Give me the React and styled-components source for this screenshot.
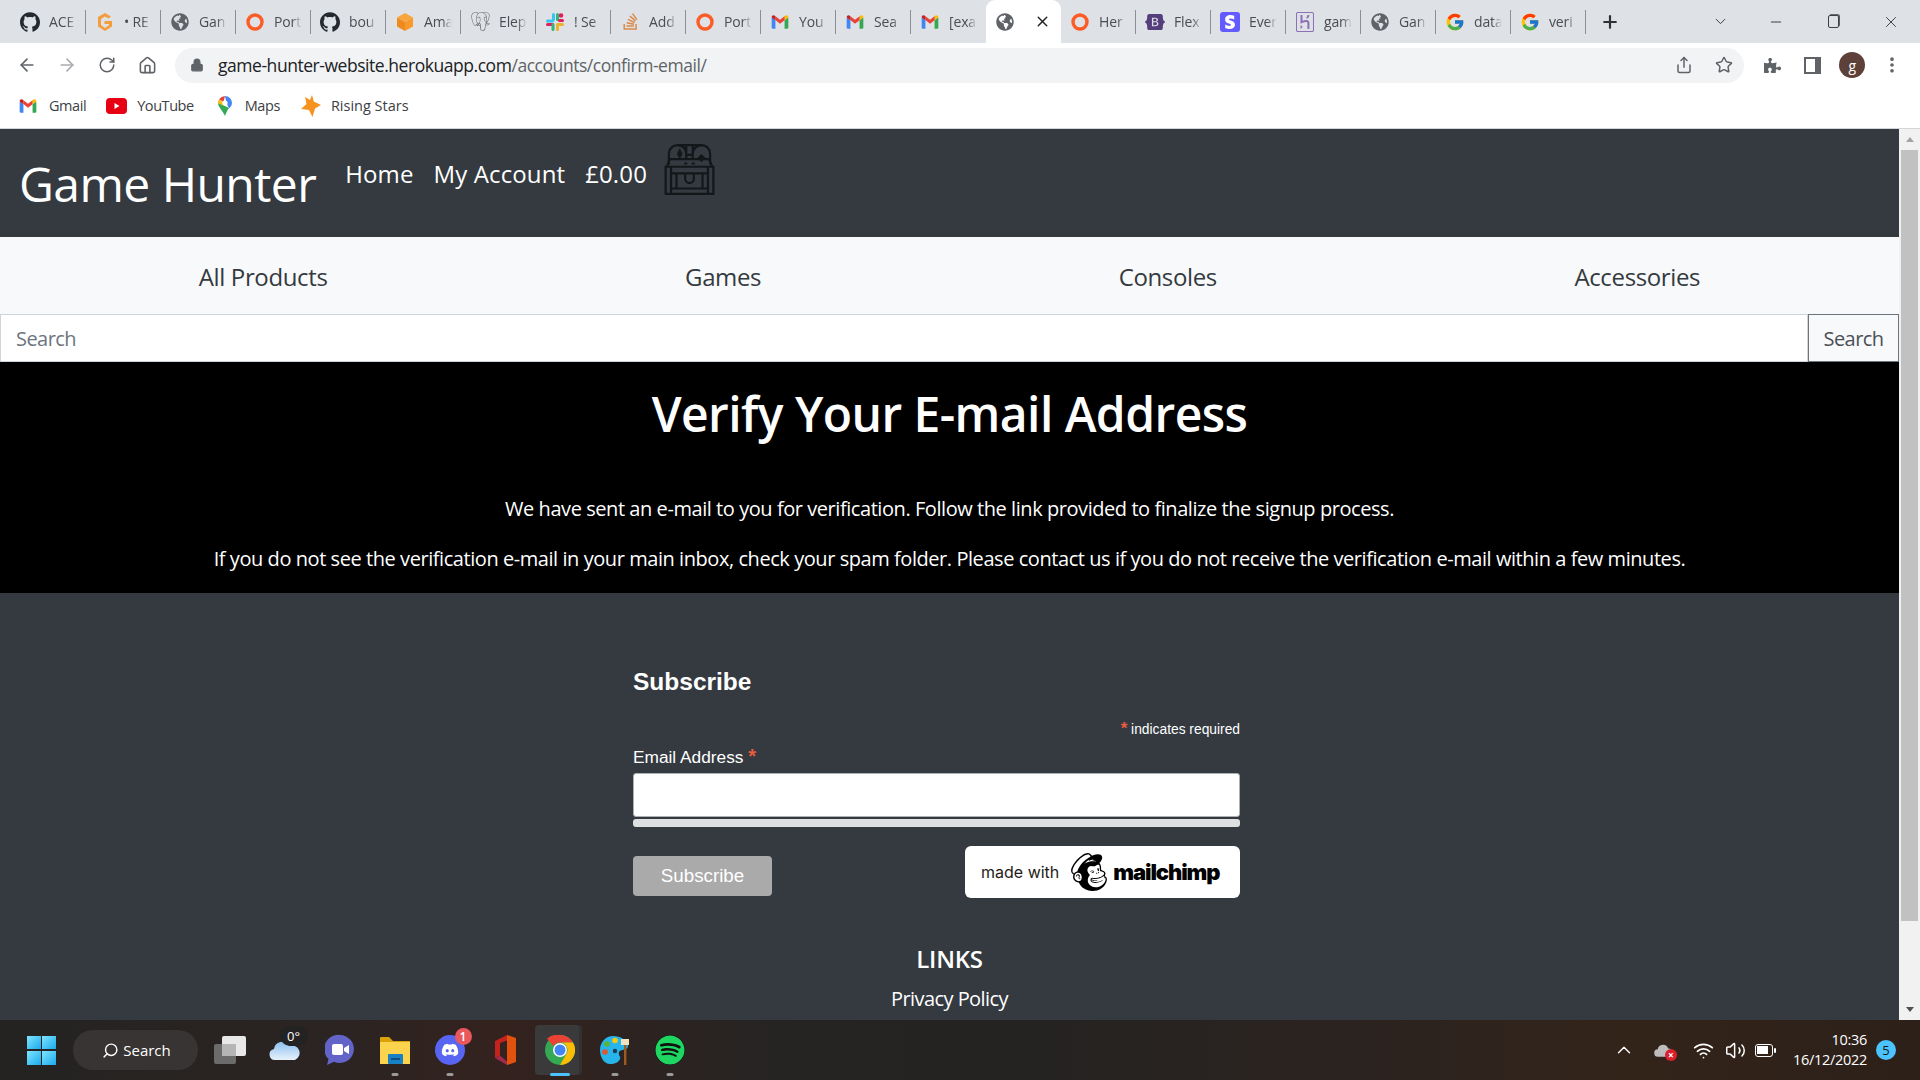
import React from "react";
import styled, { createGlobalStyle } from "styled-components";
import {
  ArrowLeft, ArrowRight, RotateCw, House, Lock, Share, Star, EllipsisVertical, Wifi, Volume2,
  ChevronUp, ChevronDown, Search as SearchIcon, Minus, X, Plus,
} from "lucide-react";
import { SiGithub, SiHeroku, SiBootstrap, SiMailchimp, SiPostgresql } from "react-icons/si";
import { FaGlobeAmericas, FaStripeS, FaStackOverflow, FaDiscord, FaSpotify, FaPuzzlePiece } from "react-icons/fa";
import { FcGoogle } from "react-icons/fc";

const UI = `"Open Sans", "Noto Sans", sans-serif`;
const ARIAL = `"Liberation Sans", Arial, sans-serif`;

const Global = createGlobalStyle`
  html, body { margin: 0; padding: 0; height: 100%; overflow: hidden; background: #fff; }
  * { box-sizing: border-box; }
  #root { height: 1080px; }
`;

const Screen = styled.div`
  width: 1920px; height: 1080px; display: flex; flex-direction: column; overflow: hidden;
  font-family: ${UI}; letter-spacing: -0.035em;
`;

/* ---------- tab strip ---------- */
const TabStrip = styled.div`
  height: 43px; flex: none; background: #dee1e6; display: flex; align-items: center;
  padding-left: 11px; color: #3c4043;
`;
const Tab = styled.div`
  width: 75px; height: 43px; flex: none; display: flex; align-items: center; gap: 9px;
  padding: 0 9px; position: relative; font-size: 14px; letter-spacing: -0.01em; color: #4a4e52;
  background: ${(p) => (p.$active ? "#fff" : "transparent")};
  border-radius: ${(p) => (p.$active ? "9px 9px 0 0" : "0")};
  &::after {
    content: ""; position: absolute; right: 0; top: 10px; height: 24px; width: 1px;
    background: ${(p) => (p.$plain ? "transparent" : "#8b8e93")};
  }
`;
const TabIcon = styled.span`
  width: 20px; height: 20px; flex: none; display: flex; align-items: center; justify-content: center;
  color: ${(p) => p.$color || "#3c4043"};
`;
const TabLabel = styled.span`
  flex: 1; min-width: 0; white-space: nowrap;
  -webkit-mask-image: linear-gradient(to right, #000 65%, transparent 100%);
  mask-image: linear-gradient(to right, #000 65%, transparent 100%);
`;
const TabClose = styled.span`
  margin-left: auto; display: flex; color: #202124; margin-right: 1px;
`;
const NewTab = styled.span`
  margin-left: 14px; display: flex; color: #2f3133;
`;
const WindowControls = styled.div`
  margin-left: auto; display: flex; align-items: center; color: #3c4043;
`;
const WinButton = styled.span`
  width: ${(p) => p.$w}px; display: flex; justify-content: center;
`;
const RestoreGlyph = styled.span`
  width: 11px; height: 13px; border: 1.3px solid #3c4043; border-radius: 2px; display: block;
  box-shadow: 1px -1px 0 -0.2px #3c4043;
`;

/* ---------- toolbar ---------- */
const Toolbar = styled.div`
  height: 44px; flex: none; background: #fff; display: flex; align-items: center; padding-left: 7px;
`;
const ToolButton = styled.span`
  width: 40px; flex: none; display: flex; justify-content: center;
  color: ${(p) => p.$color || "#5f6368"};
`;
const Omnibox = styled.div`
  width: 1569px; height: 35px; margin-left: 8px; flex: none; background: #f1f3f4; border-radius: 18px;
  display: flex; align-items: center; padding: 0 0 0 15px; font-size: 17.5px; color: #5f6368; letter-spacing: -0.026em;
`;
const Host = styled.span`
  color: #202124;
`;
const OmniText = styled.span`
  margin-left: 14px; white-space: nowrap;
`;
const OmniActions = styled.div`
  margin-left: auto; display: flex; gap: 0; color: #5f6368;
`;
const OmniAction = styled.span`
  width: 40px; display: flex; justify-content: center;
`;
const ToolSide = styled.div`
  display: flex; align-items: center; margin-left: 8px;
`;
const PanelGlyph = styled.span`
  width: 17px; height: 17px; border: 2.5px solid #5f6368; border-right-width: 6px; display: block;
`;
const Avatar = styled.span`
  width: 26px; height: 26px; border-radius: 50%; background: #5d4037; color: #fff; font-size: 14px;
  display: flex; align-items: center; justify-content: center;
`;

/* ---------- bookmarks ---------- */
const BookmarkBar = styled.div`
  height: 42px; flex: none; background: #fff; border-bottom: 1px solid #d3d5d8; display: flex; align-items: center;
  padding: 0 0 4px 18px; font-size: 14.5px; color: #3c4043; letter-spacing: -0.03em;
`;
const Bookmark = styled.span`
  display: flex; align-items: center; white-space: nowrap;
  gap: ${(p) => p.$gap}px; margin-right: ${(p) => p.$after}px;
  letter-spacing: ${(p) => (p.$wide ? "0" : "inherit")};
`;

/* ---------- content ---------- */
const Viewport = styled.div`
  flex: 1; min-height: 0; display: flex;
`;
const Page = styled.div`
  flex: 1; min-width: 0; display: flex; flex-direction: column; overflow: hidden;
`;
const Header = styled.header`
  height: 108px; flex: none; background: #343a40; display: flex; align-items: flex-start; padding: 15px 19px 0; color: #fff;
`;
const Brand = styled.div`
  font-size: 48px; line-height: 72px; margin: 4px 29px 0 0; white-space: nowrap;
`;
const HeadLinks = styled.nav`
  display: flex; gap: 20px; font-size: 24px; line-height: 36px; margin-top: 12px; letter-spacing: 0.005em;
`;
const Chest = styled.svg`
  width: 51px; height: 51px; margin-left: 17px; flex: none;
`;
const CategoryNav = styled.nav`
  height: 77px; flex: none; background: #f8f9fa; padding: 2px 20px 0; display: flex; align-items: center;
  justify-content: space-around; font-size: 24px; color: #343a40; letter-spacing: -0.015em;
`;
const SearchRow = styled.div`
  height: 48px; flex: none; display: flex; background: #f8f9fa;
`;
const SearchInput = styled.div`
  flex: 1; border: 1px solid #ced4da; background: #fff; padding: 0 15px; display: flex; align-items: center;
  font-size: 20px; color: #6c757d;
`;
const SearchButton = styled.div`
  width: 91px; flex: none; border: 1px solid #6c757d; display: flex; align-items: center; justify-content: center;
  font-size: 20px; color: #495057;
`;
const Hero = styled.section`
  height: 231px; flex: none; background: #000; color: #fff; text-align: center; padding-top: 16px;
`;
const HeroTitle = styled.h1`
  margin: 0 0 44px; font-size: 48px; line-height: 72px; font-weight: 600;
`;
const HeroText = styled.p`
  margin: 0 0 20px; font-size: 20px; line-height: 30px; letter-spacing: -0.022em;
`;
const Footer = styled.footer`
  flex: 1; min-height: 0; background: #343a40; color: #fff; overflow: hidden; padding-top: 71px;
  display: flex; flex-direction: column; align-items: center;
`;
const SubscribeForm = styled.div`
  width: 607px; margin-right: 26px; font-family: ${ARIAL}; letter-spacing: 0; display: flex; flex-direction: column;
`;
const FormTitle = styled.h2`
  margin: 0; font-size: 24.5px; line-height: 36px; font-weight: 700;
`;
const Required = styled.div`
  text-align: right; font-size: 13.8px; line-height: 18px; margin-top: 20px;
`;
const Star2 = styled.span`
  color: #e85c41; font-size: ${(p) => p.$size || 17}px; line-height: 1; font-weight: 700;
`;
const FieldLabel = styled.label`
  font-size: 17.3px; line-height: 20px; margin-top: 7px; display: block; height: 20px;
`;
const EmailInput = styled.div`
  height: 44px; margin-top: 7px; background: #fff; border: 1px solid #abb0b2; border-radius: 3px;
`;
const ThinBar = styled.div`
  height: 8px; margin-top: 2px; background: #dfe0e1; border-radius: 3px;
`;
const FormActions = styled.div`
  display: flex; justify-content: space-between; margin-top: 19px;
`;
const SubmitButton = styled.div`
  width: 139px; height: 40px; margin-top: 10px; background: #aaa; border-radius: 4px; color: #fff; font-size: 18.8px;
  display: flex; align-items: center; justify-content: center;
`;
const Badge = styled.div`
  width: 275px; height: 52px; background: #fff; border-radius: 6px; display: flex; align-items: center;
  padding-left: 16px; color: #241c15;
`;
const BadgeText = styled.span`
  font-family: "Inter", ${ARIAL}; font-size: 16px; margin-right: 11px;
`;
const BadgeWord = styled.span`
  font-family: "Inter", ${ARIAL}; font-size: 22px; font-weight: 900; letter-spacing: -0.05em; margin-left: 5px; color: #000;
`;
const LinksTitle = styled.h3`
  margin: 43px 0 0; font-size: 24px; line-height: 36px; font-weight: 600; text-align: center; letter-spacing: -0.01em;
`;
const LinkItem = styled.div`
  margin-top: 7px; font-size: 20px; line-height: 30px; text-align: center;
`;

/* ---------- scrollbar ---------- */
const Scrollbar = styled.div`
  width: 21px; flex: none; background: #f1f1f1; display: flex; flex-direction: column; align-items: center;
`;
const ScrollArrow = styled.div`
  height: 21px; flex: none; display: flex; align-items: center; justify-content: center;
  &::before {
    content: ""; border-left: 4.5px solid transparent; border-right: 4.5px solid transparent;
    ${(p) => (p.$down ? "border-top: 5px solid #505050;" : "border-bottom: 5px solid #a3a3a3;")}
  }
`;
const ScrollThumb = styled.div`
  width: 17px; height: 771px; background: #c1c1c1;
`;
const ScrollGap = styled.div`
  flex: 1;
`;

/* ---------- taskbar ---------- */
const Taskbar = styled.div`
  height: 60px; flex: none; display: flex; align-items: center; padding-left: 27px; color: #fff; letter-spacing: 0;
  background: linear-gradient(90deg, #242322 0%, #2b2422 18%, #34221e 26%, #262423 40%, #242322 52%, #2b2320 70%, #33241a 85%, #2c2019 100%);
`;
const WinLogo = styled.div`
  width: 29px; height: 29px; flex: none; display: grid; grid-template-columns: 1fr 1fr; gap: 1.5px;
`;
const WinPane = styled.span`
  background: linear-gradient(135deg, #7fe5fd, #19a9ee);
`;
const SearchPill = styled.div`
  width: 125px; height: 40px; margin-left: 17px; flex: none; border-radius: 20px; background: #383433;
  display: flex; align-items: center; justify-content: center; gap: 4px; font-size: 15px; padding-left: 2px;
`;
const TaskSlots = styled.div`
  display: flex; margin-left: 4px;
`;
const Slot = styled.div`
  width: 55px; height: 60px; flex: none; position: relative; display: flex; align-items: center; justify-content: center;
`;
const SlotActive = styled.span`
  position: absolute; left: 3px; top: 5px; width: 44px; height: 50px; border-radius: 4px; background: #3a3a3a;
  box-shadow: 3px 0 0 #323232;
`;
const SlotGlyph = styled.span`
  position: relative; display: flex;
`;
const RunDot = styled.span`
  position: absolute; bottom: 4px; left: 50%; transform: translateX(-50%); height: 3px; border-radius: 2px;
  width: ${(p) => (p.$on ? 20 : 7)}px; background: ${(p) => (p.$on ? "#4cc2ff" : "#9a9a9a")};
`;
const Counter = styled.span`
  position: absolute; top: -7px; right: -7px; width: 17px; height: 17px; border-radius: 50%; background: #e9585c;
  font-size: 12px; display: flex; align-items: center; justify-content: center; font-weight: 600;
`;
const TempChip = styled.span`
  position: absolute; top: -12px; left: 11px; width: 28px; height: 20px; border-radius: 10px; background: #232323;
  font-size: 13px; display: flex; align-items: center; justify-content: center;
`;
const Tray = styled.div`
  margin-left: auto; display: flex; align-items: center; padding-right: 24px;
`;
const TrayItem = styled.span`
  width: ${(p) => p.$w}px; display: flex; justify-content: center; position: relative;
`;
const Clock = styled.div`
  font-size: 14.5px; line-height: 20px; text-align: right; margin: 0 9px 0 14px; font-family: ${UI}; letter-spacing: -0.02em;
`;
const NotifyBadge = styled.span`
  width: 20px; height: 20px; border-radius: 50%; background: #4cc2ff; color: #1a1a1a; font-size: 13px;
  display: flex; align-items: center; justify-content: center;
`;
const BatteryGlyph = styled.span`
  width: 18px; height: 13px; border: 1.5px solid #fff; border-radius: 3px; position: relative; display: block;
  background: linear-gradient(#fff, #fff) 1px 1px / 11px 8px no-repeat;
  &::after { content: ""; position: absolute; right: -4px; top: 3px; width: 2px; height: 5px; background: #fff; border-radius: 1px; }
`;
const SyncError = styled.span`
  position: absolute; right: 8px; bottom: -4px; width: 12px; height: 12px; border-radius: 50%; background: #d9202c;
  color: #fff; font-size: 10px; line-height: 12px; text-align: center; font-weight: 700;
`;

/* ---------- drawn icons ---------- */
const Gmail = ({ s = 20 }) => (
  <svg width={s} height={s} viewBox="0 0 24 24">
    <path fill="#4285f4" d="M2 6.5v12A1.5 1.5 0 0 0 3.5 20H6.5V9.5z" />
    <path fill="#34a853" d="M17.5 9.5V20h3a1.5 1.5 0 0 0 1.5-1.500v-12z" />
    <path fill="#fbbc04" d="M17.5 5v5L22 6.500C22 4 19.500 3.200 17.500 5z" />
    <path fill="#ea4335" d="M6.500 9.500V5L12 9.200 17.500 5v5L12 14z" />
    <path fill="#c5221f" d="M2 6.500 6.500 10V5C4.500 3.200 2 4 2 6.500z" />
  </svg>
);
const Ring = () => (
  <svg width="20" height="20" viewBox="0 0 20 20"><circle cx="10" cy="10" r="7" fill="none" stroke="#fc5c26" strokeWidth="3.4" /></svg>
);
const GLogo = () => (
  <svg width="18" height="20" viewBox="0 0 18 20"><path d="M15 4.500 9 1 2 5v9.500L9 19l7-4.500V9H8.500v3H13v1l-4 3-4-3V7l4-2.500 3.500 2z" fill="#f59d3d" /></svg>
);
const Cube = () => (
  <svg width="20" height="20" viewBox="0 0 20 20">
    <path fill="#f6a63c" d="M10 1l8 4.500-8 4.500-8-4.500z" /><path fill="#ef8a1e" d="M2 5.500l8 4.500v9l-8-4.500z" /><path fill="#f79a2b" d="M18 5.500 10 10v9l8-4.500z" />
  </svg>
);
const SlackLogo = () => (
  <svg width="20" height="20" viewBox="0 0 20 20">
    <rect x="1" y="7.500" width="8" height="3" rx="1.500" fill="#36c5f0" /><rect x="7" y="1" width="3" height="8" rx="1.500" fill="#36c5f0" />
    <rect x="11" y="1" width="3" height="8" rx="1.500" fill="#2eb67d" /><rect x="13" y="7" width="6" height="3" rx="1.500" fill="#e01e5a" />
    <circle cx="16" cy="3.500" r="2.300" fill="#e01e5a" /><rect x="11" y="11" width="8" height="3" rx="1.500" fill="#ecb22e" />
    <rect x="11" y="12" width="3" height="7" rx="1.500" fill="#ecb22e" /><rect x="1" y="11" width="8" height="3" rx="1.500" fill="#e01e5a" />
    <rect x="6.500" y="11" width="3" height="8" rx="1.500" fill="#2eb67d" />
  </svg>
);
const ChestIcon = () => (
  <Chest viewBox="2 3 46 47" fill="none" stroke="#14171a" strokeWidth="2">
    <path d="M6 22V12a8 8 0 0 1 8-8h22a8 8 0 0 1 8 8v10" />
    <path d="M14 4a8 8 0 0 1 8 8v4M36 4a8 8 0 0 0-8 8v4M22 4v9h6V4" />
    <path d="M4 24l3-7h36l3 7M20 21h3M27 21h3" />
    <path d="M14 12l2 4 2-4-2-4zM33 16l3 3 3-3-3-3z" fill="#14171a" strokeWidth="1" />
    <path d="M3 24h44v25H3zM8 24v25M42 24v25M8 30h34M8 44h34M13 30v14M37 30v14" />
    <path d="M21 30v5a4 4 0 0 0 8 0v-5" />
  </Chest>
);
const MapsPin = () => (
  <svg width="16" height="21" viewBox="0 0 16 21">
    <path fill="#34a853" d="M8 21C6 16 1 12 1 8l5 2 6 3c-2 3-3 5-4 8z" />
    <path fill="#fbbc04" d="M1 8c0-1.500.400-2.700 1-3.700L6.500 8 6 10.500z" />
    <path fill="#ea4335" d="M2 4.300A8 8 0 0 1 8 1L6.500 7z" />
    <path fill="#4285f4" d="M8 1a7 7 0 0 1 7 7c0 2-1.500 4-3 5.500L9.500 8z" />
    <circle cx="8" cy="8" r="2.600" fill="#fff" />
  </svg>
);
const YouTube = () => (
  <svg width="21" height="16" viewBox="0 0 21 16"><rect width="21" height="16" rx="4" fill="#e60012" /><path d="M8.500 5v6l5-3z" fill="#fff" /></svg>
);
const RisingStar = () => (
  <svg width="20" height="22" viewBox="0 0 20 22"><path d="M11 0l1.800 6.500L20 10l-6 3.500L11.500 22 8 15 0 14l5.500-5L4 2l5 3z" fill="#f6921e" /></svg>
);
const Weather = () => (
  <svg width="32" height="24" viewBox="0 0 32 24">
    <defs><linearGradient id="wx" x1="0" y1="0" x2="0" y2="1"><stop offset="0" stopColor="#8cc0f0" /><stop offset="1" stopColor="#e7f2fc" /></linearGradient></defs>
    <path d="M6 22a5.500 5.500 0 0 1-1-10.900A8 8 0 0 1 20 8a6 6 0 0 1 6 14z" fill="url(#wx)" />
  </svg>
);
const TaskView = () => (
  <svg width="32" height="28" viewBox="0 0 32 28">
    <rect x="8" y="0" width="24" height="20" rx="2" fill="#e8e8e8" /><rect x="0" y="8" width="22" height="20" rx="2" fill="#6b6b6b" /><rect x="8" y="8" width="14" height="12" fill="#b5b5b5" />
  </svg>
);
const TeamsChat = () => (
  <svg width="30" height="32" viewBox="0 0 30 32">
    <path d="M15 1a14 14 0 1 1-6 26.700L2 31l1.500-6A14 14 0 0 1 15 1z" fill="#6264c8" />
    <rect x="7" y="10" width="11" height="11" rx="2" fill="#fff" /><path d="M19 14l5-3v9l-5-3z" fill="#fff" />
  </svg>
);
const Folder = () => (
  <svg width="30" height="28" viewBox="0 0 30 28">
    <path d="M0 2a1 1 0 0 1 1-1h8l4 4h17v3H0z" fill="#d9a20b" /><rect y="6" width="30" height="22" fill="#fcd34d" />
    <rect x="8" y="18" width="15" height="10" rx="1" fill="#1681c4" /><rect x="11" y="22" width="9" height="2" fill="#0d4f80" />
  </svg>
);
const Office = () => (
  <svg width="22" height="30" viewBox="0 0 22 30">
    <path d="M13 0l9 3v24l-9 3V0z" fill="#e2520f" />
    <path d="M13 0 1 6v17l5-2.500V8l7-2.500z" fill="#c3231c" />
    <path d="M1 23l5-2.500 7 6V30z" fill="#a12a4e" />
  </svg>
);
const ChromeLogo = () => (
  <svg width="30" height="30" viewBox="0 0 30 30">
    <circle cx="15" cy="15" r="15" fill="#34a853" />
    <path d="M15 0a15 15 0 0 1 13 7.500H15a7.500 7.500 0 0 0-6.500 3.750L2 3.800A15 15 0 0 1 15 0z" fill="#ea4335" />
    <path d="M28 7.500A15 15 0 0 1 15 30l6.500-11.250A7.500 7.500 0 0 0 15 7.500z" fill="#fbbc04" />
    <circle cx="15" cy="15" r="7" fill="#fff" /><circle cx="15" cy="15" r="5.500" fill="#4285f4" />
  </svg>
);
const Paint = () => (
  <svg width="30" height="30" viewBox="0 0 30 30">
    <path d="M13 1c8 0 15 5 15 10 0 5-8 3-9 6-1 4 2 4 1 7-1 3-5 5-10 5C4 29 0 22 0 15 0 7 6 1 13 1z" fill="#27b4ea" />
    <circle cx="7" cy="9" r="2.800" fill="#5cb531" /><circle cx="15" cy="5.500" r="2.800" fill="#f6c90e" /><circle cx="5" cy="17" r="2.800" fill="#e2562b" />
    <circle cx="15" cy="16" r="2.200" fill="#1a3b52" /><rect x="24" y="8" width="2.400" height="22" fill="#9c5c20" /><path d="M21 4h8v6h-8z" fill="#efe2bc" />
  </svg>
);
const CloudGlyph = () => (
  <svg width="20" height="13" viewBox="0 0 24 15"><path d="M5 15a4.500 4.500 0 0 1-.5-9A6.500 6.500 0 0 1 17 5a5 5 0 0 1 1 10z" fill="#bdbdbd" /></svg>
);
const GreyGlobe = () => <FaGlobeAmericas size={18} color="#5f6368" />;

function StripeBox() {
  return <FaStripeS size={20} color="#fff" style={{ background: "#635bff", borderRadius: 3, padding: 3 }} />;
}
function HerokuBox() {
  return <SiHeroku size={20} color="#8d6fb5" />;
}

const tabsBefore = [
  [<SiGithub size={20} color="#24292f" />, "ACE"], [<GLogo />, "• RE"], [<GreyGlobe />, "Gan"], [<Ring />, "Port"],
  [<SiGithub size={20} color="#24292f" />, "bou"], [<Cube />, "Ama"], [<SiPostgresql size={19} color="#6a6f74" />, "Elep"], [<SlackLogo />, "! Se"],
  [<FaStackOverflow size={19} color="#d98a4b" />, "Add"], [<Ring />, "Port"], [<Gmail />, "You"], [<Gmail />, "Sea"], [<Gmail />, "[exa"],
];
const tabsAfter = [
  [<Ring />, "Her"], [<SiBootstrap size={20} color="#563d7c" />, "Flex"], [<StripeBox />, "Ever"], [<HerokuBox />, "gam"],
  [<GreyGlobe />, "Gan"], [<FcGoogle size={20} />, "data"], [<FcGoogle size={20} />, "veri"],
];

const slots = [
  { icon: <TaskView /> },
  { icon: <Weather />, chip: "0°" },
  { icon: <TeamsChat /> },
  { icon: <Folder />, dot: true },
  { icon: <FaDiscord size={19} color="#fff" style={{ background: "#5865f2", borderRadius: "50%", padding: 6, width: 30, height: 30 }} />, dot: true, count: 1 },
  { icon: <Office /> },
  { icon: <ChromeLogo />, active: true },
  { icon: <Paint />, dot: true },
  { icon: <FaSpotify size={30} color="#1ed760" style={{ background: "#111", borderRadius: "50%" }} />, dot: true },
];

export default function App() {
  return (
    <Screen>
      <Global />
      <TabStrip>
        {tabsBefore.map(([icon, text], i) => (
          <Tab key={i} $plain={i === 12}><TabIcon>{icon}</TabIcon><TabLabel>{text}</TabLabel></Tab>
        ))}
        <Tab $active $plain>
          <TabIcon><GreyGlobe /></TabIcon>
          <TabClose><X size={17} strokeWidth={2} /></TabClose>
        </Tab>
        {tabsAfter.map(([icon, text], i) => (
          <Tab key={i}><TabIcon>{icon}</TabIcon><TabLabel>{text}</TabLabel></Tab>
        ))}
        <NewTab><Plus size={20} strokeWidth={2.6} /></NewTab>
        <WindowControls>
          <WinButton $w={56}><ChevronDown size={17} strokeWidth={1.4} /></WinButton>
          <WinButton $w={56}><Minus size={16} strokeWidth={1.6} /></WinButton>
          <WinButton $w={58}><RestoreGlyph /></WinButton>
          <WinButton $w={58}><X size={18} strokeWidth={1.3} /></WinButton>
        </WindowControls>
      </TabStrip>

      <Toolbar>
        <ToolButton><ArrowLeft size={20} strokeWidth={2} /></ToolButton>
        <ToolButton $color="#a9acb0"><ArrowRight size={20} strokeWidth={2} /></ToolButton>
        <ToolButton><RotateCw size={18} strokeWidth={2} /></ToolButton>
        <ToolButton><House size={19} strokeWidth={2} /></ToolButton>
        <Omnibox>
          <Lock size={14} fill="#5f6368" strokeWidth={2} />
          <OmniText><Host>game-hunter-website.herokuapp.com</Host>/accounts/confirm-email/</OmniText>
          <OmniActions>
            <OmniAction><Share size={18} /></OmniAction>
            <OmniAction><Star size={18} /></OmniAction>
          </OmniActions>
        </Omnibox>
        <ToolSide>
          <ToolButton><FaPuzzlePiece size={17} /></ToolButton>
          <ToolButton><PanelGlyph /></ToolButton>
          <ToolButton><Avatar>g</Avatar></ToolButton>
          <ToolButton><EllipsisVertical size={20} strokeWidth={2.4} /></ToolButton>
        </ToolSide>
      </Toolbar>

      <BookmarkBar>
        <Bookmark $gap={11} $after={20}><Gmail s={20} />Gmail</Bookmark>
        <Bookmark $gap={10} $after={23}><YouTube />YouTube</Bookmark>
        <Bookmark $gap={12} $after={21}><MapsPin />Maps</Bookmark>
        <Bookmark $gap={10} $after={0} $wide><RisingStar />Rising Stars</Bookmark>
      </BookmarkBar>

      <Viewport>
        <Page>
          <Header>
            <Brand>Game Hunter</Brand>
            <HeadLinks><span>Home</span><span>My Account</span><span>£0.00</span></HeadLinks>
            <ChestIcon />
          </Header>
          <CategoryNav>
            <span>All Products</span><span>Games</span><span>Consoles</span><span>Accessories</span>
          </CategoryNav>
          <SearchRow>
            <SearchInput>Search</SearchInput>
            <SearchButton>Search</SearchButton>
          </SearchRow>
          <Hero>
            <HeroTitle>Verify Your E-mail Address</HeroTitle>
            <HeroText>We have sent an e-mail to you for verification. Follow the link provided to finalize the signup process.</HeroText>
            <HeroText>If you do not see the verification e-mail in your main inbox, check your spam folder. Please contact us if you do not receive the verification e-mail within a few minutes.</HeroText>
          </Hero>
          <Footer>
            <SubscribeForm>
              <FormTitle>Subscribe</FormTitle>
              <Required><Star2>*</Star2> indicates required</Required>
              <FieldLabel>Email Address <Star2 $size={20}>*</Star2></FieldLabel>
              <EmailInput />
              <ThinBar />
              <FormActions>
                <SubmitButton>Subscribe</SubmitButton>
                <Badge>
                  <BadgeText>made with</BadgeText>
                  <SiMailchimp size={38} color="#000" />
                  <BadgeWord>mailchimp</BadgeWord>
                </Badge>
              </FormActions>
            </SubscribeForm>
            <LinksTitle>LINKS</LinksTitle>
            <LinkItem>Privacy Policy</LinkItem>
          </Footer>
        </Page>
        <Scrollbar>
          <ScrollArrow />
          <ScrollThumb />
          <ScrollGap />
          <ScrollArrow $down />
        </Scrollbar>
      </Viewport>

      <Taskbar>
        <WinLogo><WinPane /><WinPane /><WinPane /><WinPane /></WinLogo>
        <SearchPill><SearchIcon size={17} style={{ transform: "scaleX(-1)" }} />Search</SearchPill>
        <TaskSlots>
          {slots.map((s, i) => (
            <Slot key={i}>
              {s.active && <SlotActive />}
              <SlotGlyph>
                {s.icon}
                {s.count && <Counter>{s.count}</Counter>}
                {s.chip && <TempChip>{s.chip}</TempChip>}
              </SlotGlyph>
              {(s.dot || s.active) && <RunDot $on={s.active} />}
            </Slot>
          ))}
        </TaskSlots>
        <Tray>
          <TrayItem $w={38}><ChevronUp size={22} strokeWidth={1.5} /></TrayItem>
          <TrayItem $w={42}><CloudGlyph /><SyncError>×</SyncError></TrayItem>
          <TrayItem $w={38}><Wifi size={21} strokeWidth={2} /></TrayItem>
          <TrayItem $w={26}><Volume2 size={21} strokeWidth={1.7} /></TrayItem>
          <TrayItem $w={30}><BatteryGlyph /></TrayItem>
          <Clock><div>10:36</div><div>16/12/2022</div></Clock>
          <NotifyBadge>5</NotifyBadge>
        </Tray>
      </Taskbar>
    </Screen>
  );
}
